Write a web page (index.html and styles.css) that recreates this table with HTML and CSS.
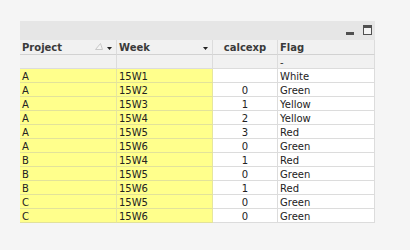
FILE: index.html
```html
<!DOCTYPE html>
<html>
<head>
<meta charset="utf-8">
<link rel="stylesheet" href="styles.css">
</head>
<body>
<div class="obj">
  <div class="caption">
    <span class="btn-min"></span>
    <span class="btn-max"></span>
  </div>
  <div class="grid">
    <div class="hd">Project
      <span class="hd-icons">
        <svg class="sort" width="8" height="7" viewBox="0 0 8 7"><polygon points="7.5,6.5 0.5,6.5 5.5,0.5" fill="#f4f4f4" stroke="#c8c8c8" stroke-width="1"/></svg>
        <svg class="drop" width="5" height="3" viewBox="0 0 5 3"><polygon points="0,0 5,0 2.5,3" fill="#222"/></svg>
      </span>
    </div>
    <div class="hd">Week
      <span class="hd-icons">
        <svg class="drop" width="5" height="3" viewBox="0 0 5 3"><polygon points="0,0 5,0 2.5,3" fill="#222"/></svg>
      </span>
    </div>
    <div class="hd num">calcexp</div>
    <div class="hd">Flag</div>

    <div class="ft"></div><div class="ft"></div><div class="ft"></div><div class="ft">-</div>

    <div class="c y">A</div><div class="c y">15W1</div><div class="c n"></div><div class="c">White</div>
    <div class="c y">A</div><div class="c y">15W2</div><div class="c n">0</div><div class="c">Green</div>
    <div class="c y">A</div><div class="c y">15W3</div><div class="c n">1</div><div class="c">Yellow</div>
    <div class="c y">A</div><div class="c y">15W4</div><div class="c n">2</div><div class="c">Yellow</div>
    <div class="c y">A</div><div class="c y">15W5</div><div class="c n">3</div><div class="c">Red</div>
    <div class="c y">A</div><div class="c y">15W6</div><div class="c n">0</div><div class="c">Green</div>
    <div class="c y">B</div><div class="c y">15W4</div><div class="c n">1</div><div class="c">Red</div>
    <div class="c y">B</div><div class="c y">15W5</div><div class="c n">0</div><div class="c">Green</div>
    <div class="c y">B</div><div class="c y">15W6</div><div class="c n">1</div><div class="c">Red</div>
    <div class="c y">C</div><div class="c y">15W5</div><div class="c n">0</div><div class="c">Green</div>
    <div class="c y">C</div><div class="c y">15W6</div><div class="c n">0</div><div class="c">Green</div>
  </div>
</div>
</body>
</html>
```

FILE: styles.css
```css
html, body {
  margin: 0;
  padding: 0;
  background: #f5f5f5;
}
body {
  padding: 21px 0 0 20px;
  font-family: "DejaVu Sans", Verdana, sans-serif;
  font-size: 10px;
  color: #222;
}
.obj {
  width: 355px;
}
.caption {
  height: 19px;
  background: #e6e6e6;
  display: flex;
  justify-content: flex-end;
  align-items: flex-start;
  box-sizing: border-box;
  padding: 4px 3px 0 0;
  gap: 9px;
}
.btn-min {
  width: 8px;
  height: 3px;
  background: #505050;
  margin-top: 7px;
}
.btn-max {
  width: 9px;
  height: 10px;
  box-sizing: border-box;
  border: 1px solid #505050;
  border-top-width: 3px;
  background: #f4f4f4;
}
.grid {
  display: grid;
  grid-template-columns: 97px 96px 65px 97px;
  background: #fff;
}
.grid > div {
  box-sizing: border-box;
  height: 14px;
  line-height: 13px;
  padding: 1px 2px 0;
  border-right: 1px solid #dcdcdc;
  border-bottom: 1px solid #dcdcdc;
  white-space: nowrap;
  overflow: hidden;
}
.grid > div.hd {
  height: 15px;
  padding: 1px 2px 0;
  background: #f1f1f1;
  font-weight: bold;
  color: #3a3a3a;
  display: flex;
  align-items: center;
  border-bottom-color: #d2d2d2;
}
.hd.num {
  justify-content: center;
}
.hd-icons {
  margin-left: auto;
  display: flex;
  align-items: center;
  gap: 4px;
  padding-right: 2px;
}
.sort {
  display: block;
  margin-top: -3px;
}
.drop {
  display: block;
  margin-top: 1px;
}
.grid > div.ft {
  background: #f1f1f1;
  color: #333;
}
.grid > div.y {
  background: #ffff8c;
  border-right-color: #e6e6a0;
  border-bottom-color: #e2e29a;
}
.c.n {
  text-align: center;
}
```
